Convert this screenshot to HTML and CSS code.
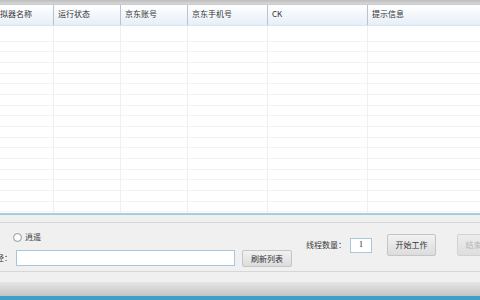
FILE: index.html
```
<!DOCTYPE html>
<html lang="zh">
<head>
<meta charset="utf-8">
<link rel="stylesheet" href="styles.css">
</head>
<body>
<div class="window">
  <div class="topbar"></div>
  <div class="grid">
    <div class="head">
      <div class="hc c1">拟器名称</div>
      <div class="hc c2">运行状态</div>
      <div class="hc c3">京东账号</div>
      <div class="hc c4">京东手机号</div>
      <div class="hc c5">CK</div>
      <div class="hc c6">提示信息</div>
    </div>
    <div class="body">
      <div class="bc c1"></div>
      <div class="bc c2"></div>
      <div class="bc c3"></div>
      <div class="bc c4"></div>
      <div class="bc c5"></div>
      <div class="bc c6"></div>
    </div>
  </div>
  <div class="blueline"></div>
  <div class="panel">
    <div class="group">
      <div class="left">
        <div class="radiorow">
          <span class="radio"></span><span class="lbl">逍遥</span>
        </div>
        <div class="pathrow">
          <span class="lbl pathlbl">径：</span>
          <span class="input path"></span>
          <span class="btn refresh">刷新列表</span>
        </div>
      </div>
      <div class="right">
        <span class="lbl">线程数量：</span>
        <span class="input num">1</span>
        <span class="btn big start">开始工作</span>
        <span class="btn big stop">结束工作</span>
      </div>
    </div>
  </div>
  <div class="status"></div>
  <div class="bottomline"></div>
</div>
</body>
</html>
```
FILE: styles.css
```
* { box-sizing: border-box; }
html, body { margin: 0; padding: 0; }
body {
  width: 480px;
  height: 300px;
  overflow: hidden;
  font-family: "Noto Sans CJK SC", "Liberation Sans", sans-serif;
  font-size: 8px;
  color: #3a3a3a;
  background: #fff;
}
.window { display: flex; flex-direction: column; height: 300px; }
.topbar {
  height: 5px;
  background: linear-gradient(#bdbdbd, #d8d8d8);
  border-bottom: 1px solid #c8ccd0;
}
.grid { height: 208px; display: flex; flex-direction: column; background: #fff; }
.head {
  height: 21px;
  display: flex;
  background: linear-gradient(#ffffff, #f4f8fc 45%, #e6eef7);
  border-bottom: 1px solid #dbe3ec;
}
.hc {
  display: flex;
  align-items: center;
  padding-left: 4px;
  padding-bottom: 2px;
  border-right: 1px solid #b9c3cd;
  line-height: 1;
  color: #333;
  white-space: nowrap;
  overflow: hidden;
}
.hc.c1 { padding-left: 0; }
.c1 { width: 54px; }
.c2 { width: 67px; }
.c3 { width: 67px; }
.c4 { width: 80px; }
.c5 { width: 100px; }
.c6 { flex: 1; border-right: none; }
.body {
  flex: 1;
  display: flex;
  background-image: repeating-linear-gradient(to bottom, transparent 0, transparent 9.67px, #f3f3f3 9.67px, #f3f3f3 10.67px);
  background-position: 0 5px;
}
.bc { border-right: 1px solid #f0f0f0; }
.bc.c6 { border-right: none; }
.blueline { height: 2px; background: #a9cde0; }
.panel {
  height: 67px;
  background: #f0f0f0;
  padding-top: 7px;
}
.group {
  height: 50px;
  border-top: 1px solid #d6d6d6;
  border-bottom: 1px solid #d6d6d6;
  display: flex;
}
.left { display: flex; flex-direction: column; }
.radiorow {
  display: flex;
  align-items: center;
  margin-top: 9px;
  margin-left: 13px;
  height: 10px;
}
.radio {
  width: 9px;
  height: 9px;
  border-radius: 50%;
  border: 1px solid #9a9a9a;
  background: radial-gradient(#ffffff 40%, #e6e6e6);
  margin-right: 3px;
}
.lbl { line-height: 1; white-space: nowrap; color: #3c3c3c; }
.pathrow {
  display: flex;
  align-items: center;
  margin-top: 7px;
}
.pathlbl { width: 20px; margin-left: -4px; }
.input {
  background: #fff;
  border: 1px solid #a7c7de;
  display: flex;
  align-items: center;
  justify-content: center;
  line-height: 1;
  font-family: "Liberation Serif", serif;
  font-size: 8px;
  color: #222;
}
.path { width: 219px; height: 16px; }
.btn {
  display: flex;
  align-items: center;
  justify-content: center;
  border: 1px solid #c5c5c5;
  border-radius: 2px;
  background: linear-gradient(#f2f2f2, #dcdcdc);
  color: #333;
  line-height: 1;
  white-space: nowrap;
}
.refresh { width: 50px; height: 17px; margin-left: 7px; margin-top: 1px; }
.right {
  display: flex;
  align-items: center;
  padding-bottom: 4px;
  margin-left: 14px;
}
.num { width: 22px; height: 15px; margin-left: 4px; }
.big { width: 49px; height: 22px; }
.start { margin-left: 15px; }
.stop { margin-left: 21px; flex-shrink: 0; color: #b8b8b8; border-color: #d2d2d2; background: linear-gradient(#ececec, #dedede); }
.status {
  height: 14px;
  background: linear-gradient(#e6e6e6, #c4c4c4);
}
.bottomline { height: 4px; background: #3f9fc9; }
```
